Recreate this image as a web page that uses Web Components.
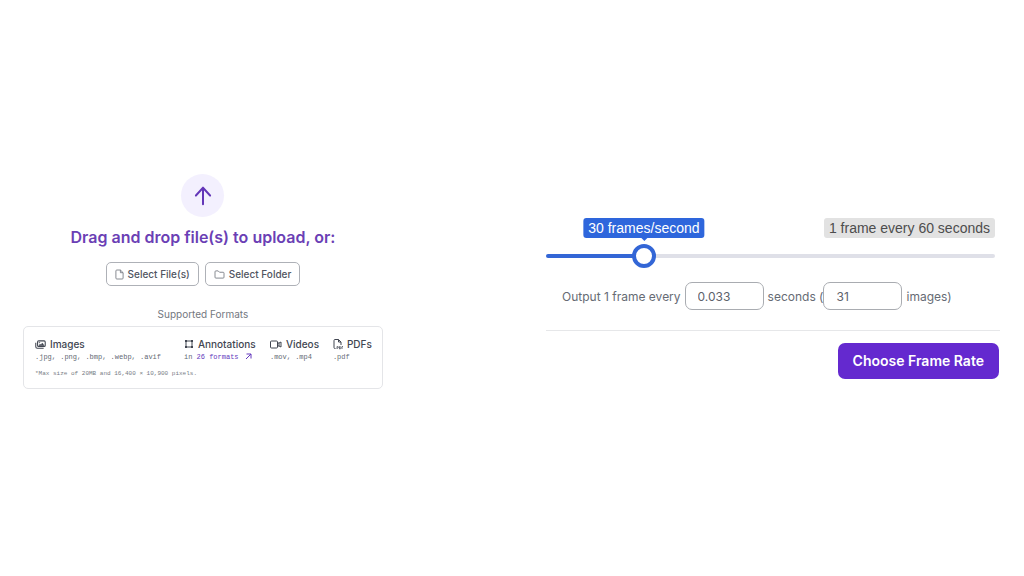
<!DOCTYPE html>
<html lang="en">
<head>
<meta charset="utf-8">
<meta name="viewport" content="width=device-width, initial-scale=1">
<title>Upload and frame rate</title>
<style>
  body { margin: 0; background: #fff; font-family: Inter, "Liberation Sans", sans-serif; color: #4b5563; }
</style>
</head>
<body>
<upload-page>
  <upload-zone slot="upload">
    <pick-button kind="file">Select File(s)</pick-button>
    <pick-button kind="folder">Select Folder</pick-button>
    <format-card slot="formats">
      <format-item kind="image" name="Images">.jpg, .png, .bmp, .webp, .avif</format-item>
      <format-item kind="annotation" name="Annotations">in <format-link>26 formats</format-link></format-item>
      <format-item kind="video" name="Videos">.mov, .mp4</format-item>
      <format-item kind="pdf" name="PDFs">.pdf</format-item>
      <span slot="note">*Max size of 20MB and 16,400 × 10,900 pixels.</span>
    </format-card>
  </upload-zone>
  <frame-rate-panel slot="rate">
    <frame-slider></frame-slider>
    <output-fields></output-fields>
    <primary-button slot="action">Choose Frame Rate</primary-button>
  </frame-rate-panel>
</upload-page>
<script>
const ICONS = {
  arrow: '<svg viewBox="0 0 24 24" width="20" height="22" fill="none" stroke="currentColor" stroke-width="2.400" preserveAspectRatio="none" stroke-linecap="round" stroke-linejoin="round"><path d="M12 21V3M3.500 11.500L12 3L20.500 11.500"/></svg>',
  file: '<svg viewBox="0 0 10 12" width="9" height="11" fill="none" stroke="currentColor" stroke-width="1" stroke-linejoin="round"><path d="M2 1H6L9 4V10Q9 11 8 11H2Q1 11 1 10V2Q1 1 2 1ZM6 1V4H9"/></svg>',
  folder: '<svg viewBox="0 0 12 10" width="11" height="9" fill="none" stroke="currentColor" stroke-width="1" stroke-linejoin="round"><path d="M2 1H4.500L6 2.500H10Q11 2.500 11 3.500V8Q11 9 10 9H2Q1 9 1 8V2Q1 1 2 1Z"/></svg>',
  image: '<svg viewBox="0 0 24 20" width="11" height="9" fill="none" stroke="currentColor" stroke-width="2.400" stroke-linejoin="round"><path d="M8 2H20Q22.500 2 22.500 4.500V12Q22.500 14.500 20 14.500H8Q5.500 14.500 5.500 12V4.500Q5.500 2 8 2Z"/><path d="M1.500 6V15Q1.500 18.500 5 18.500H19"/><path d="M8 13L11 9L13 11L16 6.500L20.500 13Z" fill="currentColor" stroke-width="1"/><circle cx="9.500" cy="5.800" r="1" fill="currentColor" stroke-width="1"/></svg>',
  annotation: '<svg viewBox="0 0 20 20" width="10" height="10" fill="none" stroke="currentColor" stroke-width="2"><path d="M4 5V15M16 5V15M5 4H15M5 16H15"/><path fill="currentColor" stroke="none" d="M2 2H6V6H2ZM14 2H18V6H14ZM2 14H6V18H2ZM14 14H18V18H14Z"/></svg>',
  video: '<svg viewBox="0 0 24 18" width="12" height="9" fill="none" stroke="currentColor" stroke-width="2" stroke-linejoin="round"><path d="M3 2H13Q15 2 15 4V14Q15 16 13 16H3Q1 16 1 14V4Q1 2 3 2ZM15 6H18L22 4V14L18 12H15M18 6V12"/></svg>',
  pdf: '<svg viewBox="0 0 20 22" width="10" height="11" fill="none" stroke="currentColor" stroke-width="2" stroke-linejoin="round"><path d="M5 19H4Q2 19 2 17V3Q2 1 4 1H11L16 6V12M11 1V6H16"/><path d="M8 20V15H9Q11 15 11 16.500T9 18H8M13 15V20M13 20Q16 20 16 17.500T13 15M18 20V15H20" stroke-width="1.500"/></svg>',
  out: '<svg viewBox="0 0 14 14" width="7" height="7" fill="none" stroke="currentColor" stroke-width="2"><path d="M3 2H12V11M12 2L2 12"/></svg>'
};

function define(name, template) {
  customElements.define(name, class extends HTMLElement {
    connectedCallback() {
      if (this.shadowRoot) return;
      this.attachShadow({ mode: 'open' }).innerHTML =
        typeof template === 'function' ? template(this) : template;
    }
  });
}

define('upload-page', `
  <style>
    :host { display: grid; grid-template-columns: 360fr 454fr; column-gap: 16.7%; align-items: start;
            box-sizing: border-box; min-height: 100vh; padding: 174px 24px 24px 23px; }
    .rate { padding-top: 44px; }
    @media (max-width: 820px) { :host { grid-template-columns: 1fr; padding-top: 48px; } }
  </style>
  <main><slot name="upload"></slot></main>
  <section class="rate" aria-label="Frame rate"><slot name="rate"></slot></section>`);

define('upload-zone', `
  <style>
    :host { display: flex; flex-direction: column; align-items: center; }
    .badge { display: grid; place-items: center; width: 43px; height: 43px; border-radius: 50%;
             background: #f3f0fe; color: #6336b8; }
    h1 { margin: 10px 0 14px; font-size: 16px; line-height: 21px; font-weight: 600; color: #6b3fb5; white-space: nowrap; }
    .buttons { display: flex; gap: 6px; }
    h2 { margin: 22px 0 6px; font-size: 10px; line-height: 12px; font-weight: 400; color: #737880; }
    .formats { align-self: stretch; }
  </style>
  <div class="badge">${ICONS.arrow}</div>
  <h1>Drag and drop file(s) to upload, or:</h1>
  <div class="buttons"><slot></slot></div>
  <h2>Supported Formats</h2>
  <div class="formats"><slot name="formats"></slot></div>`);

define('pick-button', el => `
  <style>
    :host { display: block; }
    button { display: flex; align-items: center; gap: 4px; height: 24px; padding: 0 8px;
             border: 1px solid #aeb1b7; border-radius: 5px; background: #fff; color: #50555f;
             font: 500 10px/12px Inter, sans-serif; white-space: nowrap; cursor: pointer; }
    svg { color: #7b7f87; }
  </style>
  <button type="button">${ICONS[el.getAttribute('kind')]}<slot></slot></button>`);

define('format-card', `
  <style>
    :host { display: block; border: 1px solid #e4e5e8; border-radius: 5px; padding: 10px 10px 10px 11px; }
    .items { display: grid; grid-template-columns: 149fr 86fr 63fr 39fr; }
    .note { margin-top: 7px; font: 6px/8px "Liberation Mono", monospace; color: #777c84; }
    @media (max-width: 400px) { .items { grid-template-columns: 1fr 1fr; row-gap: 8px; } }
  </style>
  <div class="items"><slot></slot></div>
  <div class="note"><slot name="note"></slot></div>`);

define('format-item', el => `
  <style>
    :host { display: block; white-space: nowrap; min-width: 0; }
    h3 { display: flex; align-items: center; gap: 4px; margin: 0; font-size: 10px; line-height: 14px;
         font-weight: 500; color: #414651; }
    p { margin: 0; font: 7px/12px "Liberation Mono", monospace; color: #646a74; }
  </style>
  <h3>${ICONS[el.getAttribute('kind')]}<span>${el.getAttribute('name')}</span></h3>
  <p><slot></slot></p>`);

define('format-link', `
  <style>
    :host { display: inline; }
    a { color: #6439bd; text-decoration: none; }
    svg { margin-left: 6px; vertical-align: -1px; }
  </style>
  <a href="#formats"><slot></slot>${ICONS.out}</a>`);

define('frame-rate-panel', `
  <style>
    :host { display: block; }
    .controls { padding-bottom: 20px; border-bottom: 1px solid #e6e7e9; }
    .action { display: flex; justify-content: flex-end; padding: 12px 1px 0 0; }
  </style>
  <div class="controls"><slot></slot></div>
  <div class="action"><slot name="action"></slot></div>`);

customElements.define('frame-slider', class extends HTMLElement {
  connectedCallback() {
    if (this.shadowRoot) return;
    const root = this.attachShadow({ mode: 'open' });
    root.innerHTML = `
      <style>
        :host { display: block; position: relative; padding-right: 5px; --value: 20.2;
                --x: calc(12px + (100% - 29px) * var(--value) / 100);
                font: 14px/20px "Liberation Sans", sans-serif; }
        .ends { display: flex; justify-content: flex-end; }
        .max, .tip { padding: 0 5px; border-radius: 3px; white-space: nowrap; }
        .max { background: #e2e2e2; color: #4d4d4d; }
        .tip { position: absolute; top: 0; left: var(--x); transform: translateX(-50%);
               background: #2e66dc; color: #fff; }
        .tip::after { content: ""; position: absolute; top: 100%; left: 50%; margin-left: -3px;
                      border: 3px solid transparent; border-top-color: #2e66dc; border-bottom: 0; }
        input { display: block; appearance: none; width: 100%; height: 24px; margin: 6px 0 0; background: none; }
        input::-webkit-slider-runnable-track { height: 4px; border-radius: 2px;
          background: linear-gradient(90deg, #3366d6 calc(var(--value) * 1%), #dfe0e8 0); }
        input::-webkit-slider-thumb { appearance: none; box-sizing: border-box; width: 24px; height: 24px;
          margin-top: -10px; border: 4px solid #3366d6; border-radius: 50%; background: #fff; }
      </style>
      <div class="ends"><span class="max">1 frame every 60 seconds</span></div>
      <output class="tip" for="rate">30 frames/second</output>
      <input id="rate" type="range" min="0" max="100" step="0.1" value="20.2" aria-label="Frame rate">`;
    const input = root.querySelector('input');
    input.addEventListener('input', () => this.style.setProperty('--value', input.value));
  }
});

define('output-fields', `
  <style>
    :host { display: flex; align-items: center; padding: 14px 0 0 16px; font-size: 12px; line-height: 16px;
            color: #666b74; white-space: nowrap; }
    label, span { padding-top: 2px; }
    input { box-sizing: border-box; width: 79px; height: 28px; padding: 0 12px; border: 1px solid #a9acb1;
            border-radius: 7px; background: #fff; color: #5d626b; font: 12px/16px Inter, sans-serif; }
    .interval { margin: 0 4px; }
    .count { margin-right: 4px; }
  </style>
  <label for="interval">Output 1 frame every</label>
  <input class="interval" id="interval" type="text" value="0.033">
  <label for="count">seconds (</label>
  <input class="count" id="count" type="text" value="31">
  <span>images)</span>`);

define('primary-button', `
  <style>
    :host { display: block; }
    button { height: 36px; padding: 0 15px; border: 0; border-radius: 7px; background: #6429cf; color: #fff;
             font: 600 14px/20px Inter, sans-serif; white-space: nowrap; cursor: pointer; }
  </style>
  <button type="button"><slot></slot></button>`);
</script>
</body>
</html>
